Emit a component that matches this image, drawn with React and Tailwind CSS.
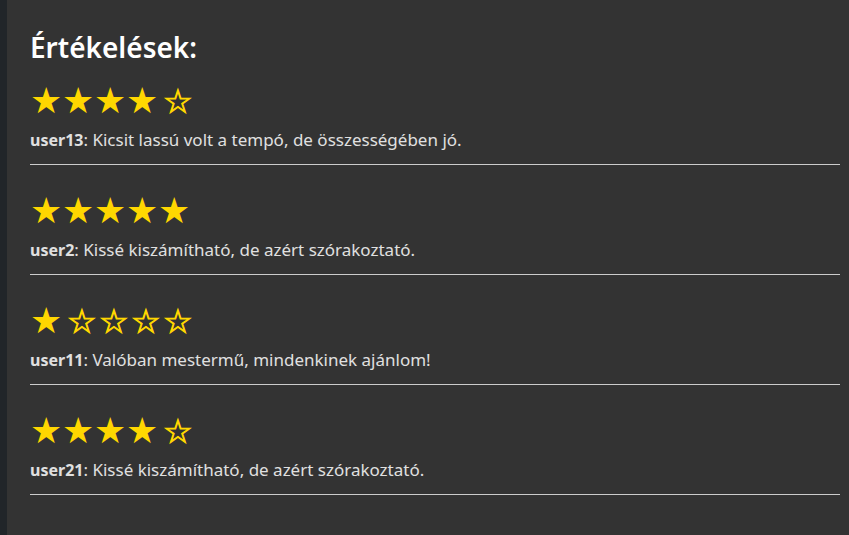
import React from 'react';

const reviews = [
  { user: 'user13', rating: 4, text: 'Kicsit lassú volt a tempó, de összességében jó.' },
  { user: 'user2', rating: 5, text: 'Kissé kiszámítható, de azért szórakoztató.' },
  { user: 'user11', rating: 1, text: 'Valóban mestermű, mindenkinek ajánlom!' },
  { user: 'user21', rating: 4, text: 'Kissé kiszámítható, de azért szórakoztató.' },
];

function Stars({ rating }) {
  return (
    <div className="flex items-center h-[30px] text-[36px] leading-none text-[#ffd700] font-['DejaVu_Sans',sans-serif]">
      {[1, 2, 3, 4, 5].map(i =>
        i <= rating ? (
          <span key={i} className="w-[32px] shrink-0">★</span>
        ) : (
          <span key={i} className="w-[32px] shrink-0 pl-[5px] text-[33px] [-webkit-text-stroke:0.9px_#ffd700]">☆</span>
        )
      )}
    </div>
  );
}

function App() {
  return (
    <div className="flex min-h-[535px] bg-[#333333] font-['Noto_Sans',sans-serif]">
      <div className="w-[7px] bg-[#212529] shrink-0" />
      <div className="flex-1 pl-[23px] pr-[9px] pt-[28px]">
        <h2 className="text-[28px] leading-[38px] font-semibold text-white mb-[20px]">Értékelések:</h2>
        {reviews.map((r, idx) => (
          <div key={idx} className="mb-[31px]">
            <Stars rating={r.rating} />
            <p className="mt-[12px] text-[17px] leading-[24px] text-[#e0e0e0]">
              <strong className="font-bold text-[16px]">{r.user}</strong>: {r.text}
            </p>
            <div className="mt-[12px] h-px bg-[#cccccc]" />
          </div>
        ))}
      </div>
    </div>
  );
}

export default App;
